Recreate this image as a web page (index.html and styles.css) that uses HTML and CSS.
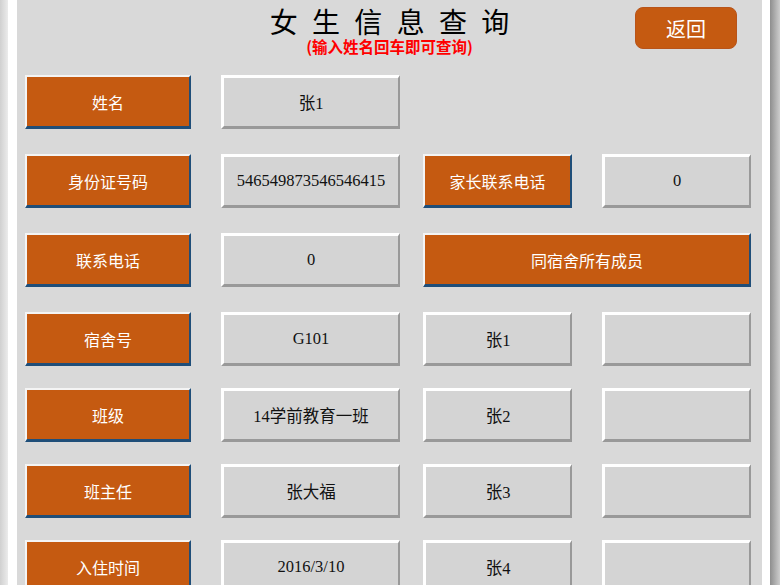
FILE: index.html
```html
<!DOCTYPE html>
<html lang="zh-CN">
<head>
  <meta charset="UTF-8">
  <meta name="viewport" content="width=device-width, initial-scale=1.0">
  <title>女生信息查询</title>
  <link rel="stylesheet" href="styles.css">
</head>
<body>

  <div class="page">
    <header class="top">
      <div class="heading">
        <h1 class="title">女 生 信 息 查 询</h1>
        <p class="hint">(输入姓名回车即可查询)</p>
      </div>
      <button class="back">返回</button>
    </header>

    <div class="sheet">
      <div class="row">
        <div class="cell label">姓名</div>
        <div class="cell value col2">张1</div>
      </div>
      <div class="row">
        <div class="cell label">身份证号码</div>
        <div class="cell value col2">546549873546546415</div>
        <div class="cell label col3">家长联系电话</div>
        <div class="cell value col4">0</div>
      </div>
      <div class="row">
        <div class="cell label">联系电话</div>
        <div class="cell value col2">0</div>
        <div class="cell label col3 wide">同宿舍所有成员</div>
      </div>
      <div class="row">
        <div class="cell label">宿舍号</div>
        <div class="cell value col2">G101</div>
        <div class="cell value col3">张1</div>
        <div class="cell value col4"></div>
      </div>
      <div class="row tight">
        <div class="cell label">班级</div>
        <div class="cell value col2">14学前教育一班</div>
        <div class="cell value col3">张2</div>
        <div class="cell value col4"></div>
      </div>
      <div class="row tight">
        <div class="cell label">班主任</div>
        <div class="cell value col2">张大福</div>
        <div class="cell value col3">张3</div>
        <div class="cell value col4"></div>
      </div>
      <div class="row tight">
        <div class="cell label">入住时间</div>
        <div class="cell value col2">2016/3/10</div>
        <div class="cell value col3">张4</div>
        <div class="cell value col4"></div>
      </div>
    </div>
  </div>

</body>
</html>
```

FILE: styles.css
```css
html, body {
  height: 100%;
}
body {
  margin: 0;
  overflow: hidden;
  font-family: "Noto Sans CJK SC", sans-serif;
  background: linear-gradient(to right,
    #d0d0d0 0, #ebebeb 8px, #fff 8px, #fff 770px, #8e8e8e 770px, #cdcdcd 780px);
}
.page {
  margin-left: 8px;
  width: 745px;
  height: 600px;
  border-left: 9px solid #fff;
  border-right: 8px solid #fff;
  background-color: #d9d9d9;
}
.top {
  display: grid;
  grid-template-columns: 1fr auto 1fr;
  height: 75px;
}
.heading {
  grid-column: 2;
  text-align: center;
}
.title {
  margin: 4px 0 0;
  padding-left: 4px;
  font-size: 28px;
  font-weight: normal;
  line-height: 34px;
  letter-spacing: 4px;
  color: #000;
}
.hint {
  margin: 0;
  font-size: 15.5px;
  font-weight: bold;
  line-height: 17px;
  color: #f00;
}
.back {
  grid-column: 3;
  justify-self: end;
  align-self: start;
  margin: 7px 25px 0 0;
  width: 102px;
  height: 42px;
  padding: 0;
  border: 1px solid #b8541a;
  border-radius: 8px;
  background-color: #c55a11;
  color: #fff;
  font-family: "Noto Sans CJK SC", sans-serif;
  font-size: 20px;
  cursor: pointer;
}
.sheet {
  padding-left: 8px;
}
.row {
  display: flex;
  height: 54px;
  margin-top: 25px;
}
.row:first-child {
  margin-top: 0;
}
.row.tight {
  margin-top: 22px;
}
.cell {
  box-sizing: border-box;
  display: flex;
  align-items: center;
  justify-content: center;
  height: 54px;
  flex-shrink: 0;
}
.label {
  width: 166px;
  background-color: #c55a11;
  color: #fff;
  font-size: 16px;
  border-top: 2px solid #f4f4f4;
  border-left: 2px solid #f4f4f4;
  border-right: 2px solid #1f4e79;
  border-bottom: 3px solid #1f4e79;
}
.value {
  width: 179px;
  background-color: #d4d4d4;
  color: #111;
  font-family: "Liberation Serif", "Noto Sans CJK SC", serif;
  font-size: 16.5px;
  border-top: 3px solid #fff;
  border-left: 3px solid #fff;
  border-right: 2px solid #999;
  border-bottom: 3px solid #999;
}
.col2 {
  margin-left: 30px;
}
.col3 {
  width: 149px;
  margin-left: 23px;
}
.col4 {
  width: 149px;
  margin-left: 30px;
}
.wide {
  width: 328px;
}
```
